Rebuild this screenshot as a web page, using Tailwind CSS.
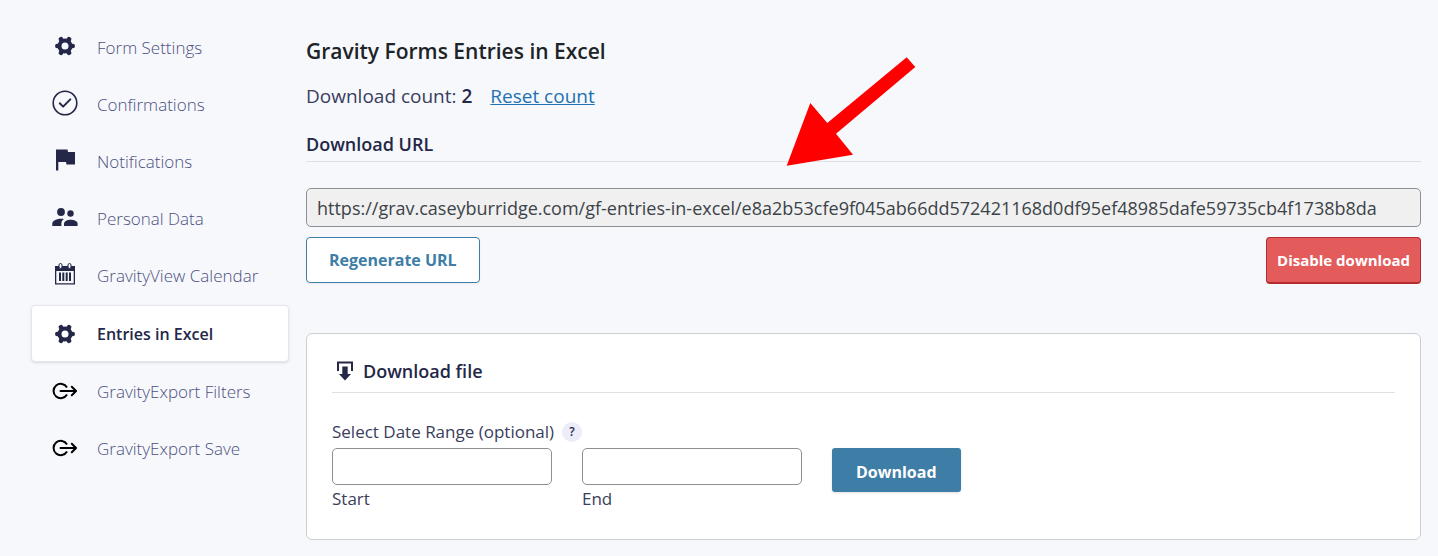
<!DOCTYPE html>
<html lang="en">
<head>
  <meta charset="UTF-8">
  <meta name="viewport" content="width=device-width, initial-scale=1.0">
  <title>Entries in Excel</title>
  <script src="https://cdn.jsdelivr.net/npm/@tailwindcss/browser@4"></script>
</head>
<body class="bg-[#f6f8fc] text-[#242748] min-h-screen font-['Open_Sans','Noto_Sans',sans-serif]">
  <!-- shared icons -->
  <svg class="hidden">
    <symbol id="icon-gear" viewBox="0 0 20 20">
      <g fill="none" stroke="currentColor">
        <circle cx="10" cy="10" r="5.500" stroke-width="4"/>
        <path stroke-width="4.600" stroke-linecap="round" d="M2.300 10h1M16.700 10h1M5.900 3.200l.5.900M13.600 15.900l.5.900M14.100 3.200l-.5.900M6.400 15.900l-.5.900"/>
      </g>
    </symbol>
    <symbol id="icon-export" viewBox="0 0 26 18">
      <g fill="none" stroke="currentColor" stroke-width="2">
        <path d="M15 5.400A7.200 7.200 0 1 0 15 12.600"/>
        <path stroke-linecap="round" d="M8.500 9h15"/>
        <path stroke-linecap="round" stroke-linejoin="round" d="M19.800 4.800L24 9l-4.200 4.200"/>
      </g>
    </symbol>
  </svg>

  <div class="flex gap-[17px] pt-[19px] pb-4 pl-[31px] pr-[17px]">
    <nav class="w-[258px] shrink-0 text-[17px] font-light text-[#4d5080]">
      <a href="#" class="flex h-[57px] items-center gap-[19px] px-[21px]">
        <svg class="mb-1 h-5 w-[26px] text-[#242748]"><use href="#icon-gear"/></svg>
        Form Settings
      </a>
      <a href="#" class="flex h-[57px] items-center gap-[19px] px-[21px]">
        <svg class="mb-1 h-[26px] w-[26px] text-[#242748]" viewBox="0 0 26 26" fill="none" stroke="currentColor">
          <circle cx="13" cy="13" r="11.800" stroke-width="1.600"/>
          <path d="M7.800 13.300l3.300 3.300 7.200-7.200" stroke-width="2" stroke-linecap="round" stroke-linejoin="round"/>
        </svg>
        Confirmations
      </a>
      <a href="#" class="flex h-[57px] items-center gap-[19px] px-[21px]">
        <svg class="mb-1 h-[26px] w-[26px] text-[#242748]" viewBox="0 0 26 26" fill="currentColor">
          <path d="M4 2.500h11.500l.5 2.500H23v12.500h-8.500L14 15H6.300v8.500H4z"/>
        </svg>
        Notifications
      </a>
      <a href="#" class="flex h-[57px] items-center gap-[19px] px-[21px]">
        <svg class="mb-1 h-[26px] w-[26px] text-[#242748]" viewBox="0 0 26 26" fill="currentColor">
          <circle cx="9" cy="8" r="3.900"/>
          <circle cx="18.500" cy="9.500" r="3.200"/>
          <path d="M.3 22v-2.300c0-3.300 5-5 8.700-5 1 0 2 .1 3 .3-2 1.200-2.600 2.700-2.600 4.300V22z"/>
          <path d="M12 22v-2.200c0-2.600 3.600-4 6.700-4s6.900 1.400 6.900 4V22z"/>
        </svg>
        Personal Data
      </a>
      <a href="#" class="flex h-[57px] items-center gap-[19px] px-[21px]">
        <svg class="mb-1 h-[26px] w-[26px] text-[#242748]" viewBox="0 0 26 26">
          <path fill="currentColor" fill-rule="evenodd" d="M3 5h20v18.500H3zM4.300 10v12.200h17.400V10z"/>
          <path fill="none" stroke="currentColor" stroke-width="2" d="M8 11.500v8.500M11.300 11.500v8.500M14.700 11.500v8.500M18 11.500v8.500"/>
          <rect x="7" y="2.500" width="3" height="5" rx="1.500" fill="#f6f8fc" stroke="currentColor"/>
          <rect x="16" y="2.500" width="3" height="5" rx="1.500" fill="#f6f8fc" stroke="currentColor"/>
        </svg>
        GravityView Calendar
      </a>
      <a href="#" aria-current="page" class="my-px flex h-[57px] items-center gap-[19px] rounded border border-[#e3e6f1] bg-white px-5 text-[16px] font-semibold text-[#242748] shadow-sm shadow-[#242748]/10">
        <svg class="h-5 w-[26px]"><use href="#icon-gear"/></svg>
        Entries in Excel
      </a>
      <a href="#" class="flex h-[57px] items-center gap-[19px] px-[21px]">
        <svg class="mb-px h-[18px] w-[26px] text-black"><use href="#icon-export"/></svg>
        GravityExport Filters
      </a>
      <a href="#" class="flex h-[57px] items-center gap-[19px] px-[21px]">
        <svg class="mb-px h-[18px] w-[26px] text-black"><use href="#icon-export"/></svg>
        GravityExport Save
      </a>
    </nav>

    <main class="relative min-w-0 flex-1 pt-4">
      <h1 class="text-[21px] leading-8 font-semibold text-[#1d2327]">Gravity Forms Entries in Excel</h1>
      <p class="mt-[15px] text-[19px] leading-7 text-[#3a3d5c]">
        Download count: <strong class="font-semibold text-[#242748]">2</strong>
        <a href="#" class="ml-[13px] text-[#2271b1] underline">Reset count</a>
      </p>

      <h2 class="mt-5 border-b border-[#dfe1e5] pb-[3px] text-[18px] leading-7 font-semibold"><label for="download-url">Download URL</label></h2>
      <input id="download-url" type="text" readonly value="https://grav.caseyburridge.com/gf-entries-in-excel/e8a2b53cfe9f045ab66dd572421168d0df95ef48985dafe59735cb4f1738b8da" class="mt-[26px] block h-[39px] w-full rounded-[5px] border border-[#8c8f94] bg-[#f0f0f0] px-[10px] text-[18px] text-[#3c4348]">
      <div class="mt-[10px] flex justify-between">
        <button type="button" class="h-[46px] rounded border border-[#3e7da6] bg-white px-[22px] text-[16px] font-bold text-[#3e7da6] shadow-xs">Regenerate URL</button>
        <button type="button" class="h-[47px] rounded border border-b-2 border-[#b32d2e] bg-[#e35b5b] px-[10px] text-[15px] font-bold text-white">Disable download</button>
      </div>

      <section class="mt-[49px] rounded-md border border-[#ccced2] bg-white px-[25px] pt-[23px] pb-[26px]">
        <h2 class="flex items-center gap-[5px] border-b border-[#dfe1e5] pb-[7px] text-[18px] leading-7 font-semibold">
          <svg class="h-[26px] w-[26px]" viewBox="0 0 26 26">
            <path fill="none" stroke="currentColor" stroke-width="2" d="M6 13V4.500h14V13"/>
            <path fill="currentColor" d="M10.300 8.500h5.400V16h3.300l-6 6.500L7 16h3.300z"/>
          </svg>
          Download file
        </h2>
        <form class="mt-6">
          <div class="mb-px flex h-[30px] items-center gap-2 text-[17px] text-[#3a3d5c]">
            <span>Select Date Range (optional)</span>
            <button type="button" aria-label="Help" class="h-5 w-5 rounded-full bg-[#ecedf8] text-[12px] font-semibold text-[#242748]">?</button>
          </div>
          <div class="flex gap-[30px] text-[17px] leading-7 text-[#3a3d5c]">
            <div>
              <input id="start" type="text" class="block h-[37px] w-[220px] rounded-[5px] border border-[#8c8f94] bg-white px-2">
              <label for="start">Start</label>
            </div>
            <div>
              <input id="end" type="text" class="block h-[37px] w-[220px] rounded-[5px] border border-[#8c8f94] bg-white px-2">
              <label for="end">End</label>
            </div>
            <button type="submit" class="h-11 rounded-[3px] bg-[#3e7da6] px-6 pt-1 text-[16px] font-bold text-white shadow-sm">Download</button>
          </div>
        </form>
      </section>

      <!-- pointer to the download URL -->
      <svg class="absolute top-[38px] left-[480px] h-[110px] w-[130px]" viewBox="0 0 130 110">
        <path fill="#f00" d="M.7 108.700L24.300 46l17 20L120.700.3l8.600 9.700L50 76.700l17 21z"/>
      </svg>
    </main>
  </div>
</body>
</html>
